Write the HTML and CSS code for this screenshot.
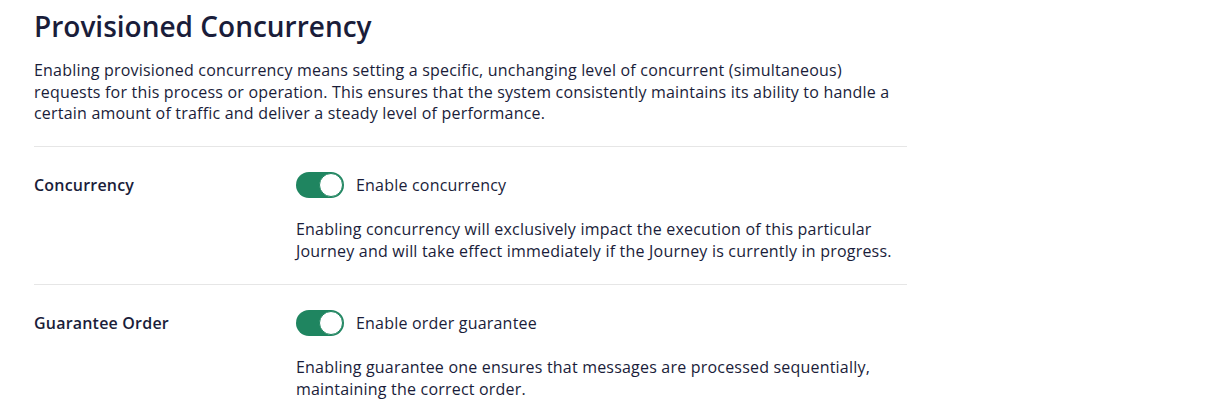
FILE: index.html
```html
<!DOCTYPE html>
<html lang="en">
<head>
<meta charset="utf-8">
<title>Provisioned Concurrency</title>
<link rel="stylesheet" href="styles.css">
</head>
<body>
<main class="panel">
  <h1 class="title">Provisioned Concurrency</h1>
  <p class="intro">Enabling provisioned concurrency means setting a specific, unchanging level of concurrent (simultaneous) requests for this process or operation. This ensures that the system consistently maintains its ability to handle a certain amount of traffic and deliver a steady level of performance.</p>

  <section class="row">
    <div class="row-label">Concurrency</div>
    <div class="row-body">
      <label class="switch-line">
        <span class="switch on"><span class="knob"></span></span>
        <span class="switch-text">Enable concurrency</span>
      </label>
      <p class="help">Enabling concurrency will exclusively impact the execution of this particular Journey and will take effect immediately if the Journey is currently in progress.</p>
    </div>
  </section>

  <section class="row">
    <div class="row-label">Guarantee Order</div>
    <div class="row-body">
      <label class="switch-line">
        <span class="switch on"><span class="knob"></span></span>
        <span class="switch-text">Enable order guarantee</span>
      </label>
      <p class="help">Enabling guarantee one ensures that messages are processed sequentially, maintaining the correct order.</p>
    </div>
  </section>
</main>
</body>
</html>
```

FILE: styles.css
```css
* { box-sizing: border-box; }
html, body { margin: 0; padding: 0; background: #ffffff; }
body {
  font-family: "Open Sans", "Liberation Sans", sans-serif;
  color: #1a1d3a;
  letter-spacing: 0.2px;
}
.panel {
  width: 873px;
  margin-left: 34px;
  padding-top: 8px;
}
.title {
  margin: 0;
  font-size: 28px;
  line-height: 36px;
  font-weight: 600;
  letter-spacing: 0;
  color: #1a1d3a;
}
.intro {
  margin: 16px 0 0;
  font-size: 16px;
  line-height: 21.5px;
  padding: 0 0 21px 0;
  border-bottom: 1px solid #e6e6e6;
}
.row {
  display: grid;
  grid-template-columns: 262px 1fr;
  padding: 25px 0 22px;
  border-bottom: 1px solid #e6e6e6;
}
.row:last-child { border-bottom: none; }
.row-label {
  font-size: 16px;
  font-weight: 600;
  line-height: 26px;
}
.switch-line {
  display: flex;
  align-items: center;
  gap: 12px;
  height: 26px;
}
.switch {
  position: relative;
  display: inline-block;
  width: 48px;
  height: 26px;
  border-radius: 13px;
  background: #1f8560;
}
.knob {
  position: absolute;
  top: 1px;
  right: 1px;
  width: 24px;
  height: 24px;
  border-radius: 50%;
  background: #ffffff;
  border: 1px solid #1f8560;
}
.switch-text {
  font-size: 16px;
}
.help {
  margin: 20px 0 0;
  font-size: 16px;
  line-height: 22px;
}
```
